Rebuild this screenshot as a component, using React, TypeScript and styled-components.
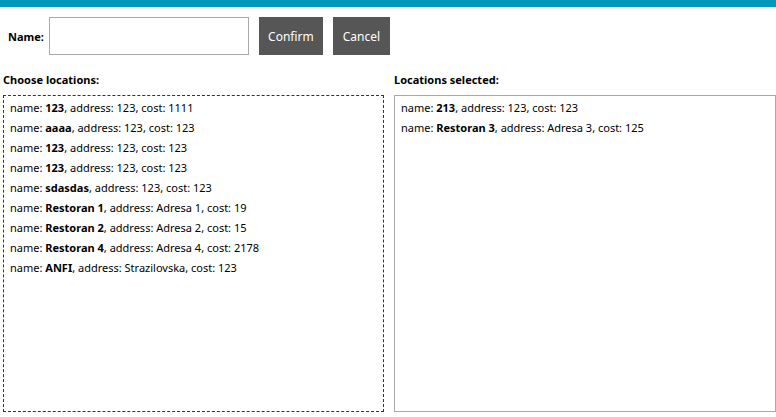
import React from "react";
import styled, { createGlobalStyle } from "styled-components";

const Global = createGlobalStyle`
  html, body { margin: 0; padding: 0; background: #fff; }
  body { font-family: "Noto Sans", "Open Sans", sans-serif; font-size: 11px; color: #000; }
  * { box-sizing: border-box; }
`;

const TopBar = styled.div`
  height: 7px;
  background: #0099bb;
`;

const FormRow = styled.div`
  display: flex;
  align-items: center;
  padding: 10px 0 0 8px;
  height: 48px;
`;

const Label = styled.label`
  font-weight: 700;
  font-size: 11px;
  margin-right: 5px;
`;

const Input = styled.input`
  width: 200px;
  height: 38px;
  border: 1px solid #aaa;
  outline: none;
  padding: 0 4px;
  font: inherit;
`;

const Button = styled.button<{ $w?: number }>`
  height: 38px;
  margin-left: 10px;
  padding: 0;
  width: ${(p) => (p.$w ? `${p.$w}px` : "auto")};
  background: #565656;
  color: #fff;
  border: none;
  font: inherit;
  font-size: 12px;
`;

const Columns = styled.div`
  display: grid;
  grid-template-columns: 381px 382px;
  column-gap: 10px;
  padding: 17px 0 0 3px;
`;

const Column = styled.div`
  display: flex;
  flex-direction: column;
`;

const Heading = styled.div`
  font-weight: 700;
  height: 23px;
  line-height: 16px;
`;

const ListBox = styled.div<{ $dashed?: boolean }>`
  height: 317px;
  border: 1px ${(p) => (p.$dashed ? "dashed #333" : "solid #aaa")};
  padding: 2px 0 0 6px;
`;

const Row = styled.div`
  line-height: 20px;
  white-space: nowrap;
`;

type Loc = { name: string; address: string; cost: number };

const available: Loc[] = [
  { name: "123", address: "123", cost: 1111 },
  { name: "aaaa", address: "123", cost: 123 },
  { name: "123", address: "123", cost: 123 },
  { name: "123", address: "123", cost: 123 },
  { name: "sdasdas", address: "123", cost: 123 },
  { name: "Restoran 1", address: "Adresa 1", cost: 19 },
  { name: "Restoran 2", address: "Adresa 2", cost: 15 },
  { name: "Restoran 4", address: "Adresa 4", cost: 2178 },
  { name: "ANFI", address: "Strazilovska", cost: 123 },
];

const selected: Loc[] = [
  { name: "213", address: "123", cost: 123 },
  { name: "Restoran 3", address: "Adresa 3", cost: 125 },
];

const LocRow = ({ l }: { l: Loc }) => (
  <Row>
    name: <b>{l.name}</b>, address: {l.address}, cost: {l.cost}
  </Row>
);

export default function App() {
  return (
    <>
      <Global />
      <TopBar />
      <FormRow>
        <Label>Name:</Label>
        <Input />
        <Button $w={64}>Confirm</Button>
        <Button $w={57}>Cancel</Button>
      </FormRow>
      <Columns>
        <Column>
          <Heading>Choose locations:</Heading>
          <ListBox $dashed>
            {available.map((l, i) => (
              <LocRow key={i} l={l} />
            ))}
          </ListBox>
        </Column>
        <Column>
          <Heading>Locations selected:</Heading>
          <ListBox>
            {selected.map((l, i) => (
              <LocRow key={i} l={l} />
            ))}
          </ListBox>
        </Column>
      </Columns>
    </>
  );
}
